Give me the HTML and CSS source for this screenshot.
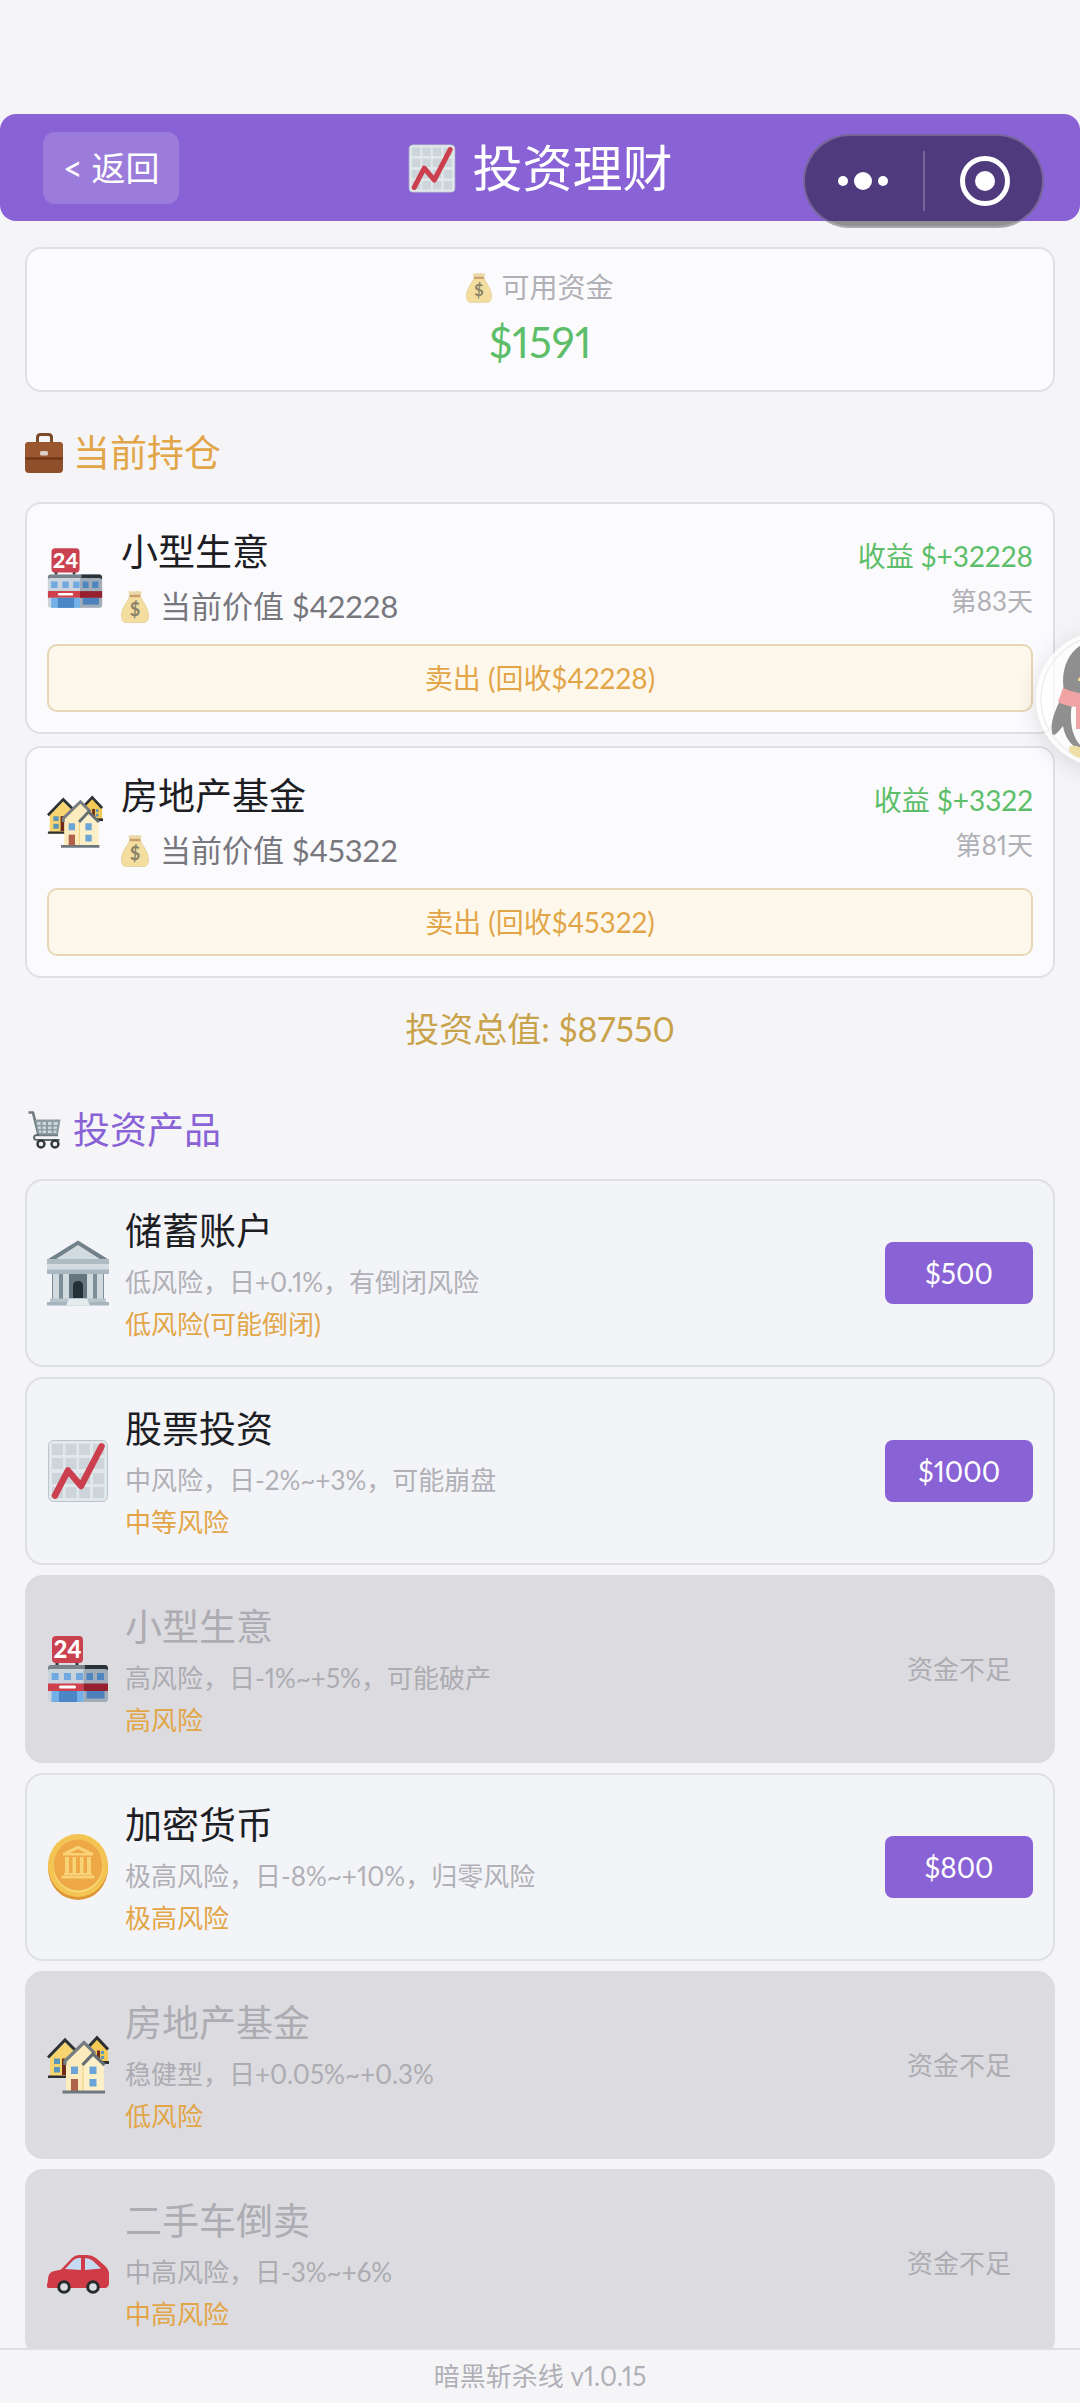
FILE: index.html
```html
<!DOCTYPE html>
<html lang="zh-CN">
<head>
<meta charset="utf-8">
<meta name="viewport" content="width=device-width, initial-scale=1">
<title>投资理财</title>
<link rel="stylesheet" href="styles.css">
</head>
<body>
<svg class="sprite" aria-hidden="true">
  <symbol id="i-chart" viewBox="0 0 62 68">
    <rect x="1.5" y="3.5" width="59" height="61" rx="5" fill="#e1e8ec" stroke="#bcc5ca"/>
    <g fill="#cdd5da">
      <path d="M5 7h11v11H5zM18.500 7h11v11h-11zM32 7h11v11H32zM46 7h11v11H46zM5 21h11v11H5zM18.500 21h11v11h-11zM32 21h11v11H32zM46 21h11v11H46zM5 36h11v11H5zM18.500 36h11v11h-11zM32 36h11v11H32zM46 36h11v11H46zM5 50h11v11H5zM18.500 50h11v11h-11zM32 50h11v11H32zM46 50h11v11H46z"/>
    </g>
    <path d="M8 58.500 21 33.500 34 49 54.500 9.500" fill="none" stroke="#cb3f4e" stroke-width="6.500" stroke-linecap="round" stroke-linejoin="round"/>
  </symbol>
  <symbol id="i-bag" viewBox="0 0 28 33">
    <path d="M7.500.8 10 1.800 12 .7 14 1.800 16 .7 18.500 1.800 20.500.8 20 5H8z" fill="#ead9a6"/>
    <path d="M8.500 6.500h11C21 11 27.500 18 27.500 25c0 5-1.500 7.500-5 7.500h-17C2 32.500.5 30 .5 25 .5 18 7 11 8.500 6.500z" fill="#f3dea0" stroke="#e3cd96" stroke-width=".8"/>
    <path d="M8.500 4.800h11v2.400h-11z" fill="#c9a06c"/>
    <text x="14" y="25.500" text-anchor="middle" font-size="18" font-weight="700" fill="#8a8268">$</text>
  </symbol>
  <symbol id="i-case" viewBox="0 0 38 40">
    <path d="M12.500 10V4.500q0-3 3-3h8q3 0 3 3V10" fill="none" stroke="#7b4a2b" stroke-width="3"/>
    <rect y="9" width="38" height="31" rx="4" fill="#8f4f2a"/>
    <path d="M0 25V12.500Q0 9 4 9h30q4 0 4 3.500V25z" fill="#9a562f"/>
    <path d="M0 24.500h38v2H0z" fill="#6b3117"/>
    <rect x="15" y="18" width="8" height="4.500" rx="1.500" fill="#ddd0c8"/>
  </symbol>
  <symbol id="i-cart" viewBox="0 0 38 40">
    <path d="M3.500 2.500H8L13.500 25H33" fill="none" stroke="#6e7b80" stroke-width="2.600" stroke-linejoin="round"/>
    <path d="M10 9.500h25.500L33 24.500H13z" fill="#8f9da3"/>
    <path d="M12 12h3.500v3H12.700zM17.500 12H21v3h-3.500zM23 12h3.500v3H23zM28.500 12H33l-.5 3h-4zM12.800 16.500h3v2.500h-2.500zM17.500 16.500H21V19h-3.500zM23 16.500h3.500V19H23zM28.500 16.500h3.700l-.5 2.500h-3.200zM13.800 20.500h2.200V23h-1.600zM17.500 20.500H21V23h-3.500zM23 20.500h3.500V23H23zM28.500 20.500h3l-.4 2.500h-2.600z" fill="#cbd9df"/>
    <path d="M14 25q-5-.5-5 2.500 0 2.500 4 2.500h21.500" fill="none" stroke="#59666b" stroke-width="2"/>
    <circle cx="16" cy="34" r="3.500" fill="#eef1f3" stroke="#30383c" stroke-width="2.400"/>
    <circle cx="30" cy="34" r="3.500" fill="#eef1f3" stroke="#30383c" stroke-width="2.400"/>
  </symbol>
  <symbol id="i-store" viewBox="0 0 62 68">
    <path d="M8.500 26h3v6h-3zM28.500 26h3v6h-3z" fill="#333a40"/>
    <rect x="5" y="1" width="31" height="27" rx="4" fill="#ca4150"/>
    <text x="20.500" y="23" text-anchor="middle" font-size="24" font-weight="900" fill="#fff">24</text>
    <rect x="1" y="30" width="60" height="37" rx="3" fill="#c9d4dc"/>
    <path d="M36.500 30H58q3 0 3 3v31q0 3-3 3H36.500z" fill="#a0adb9"/>
    <path d="M1 35v-2q0-3 3-3h34v4H3z" fill="#78838b"/>
    <path d="M38 30h20q3 0 3 4v1l-3-1H38z" fill="#2c3338"/>
    <path d="M4.600 38h7v7h-7zM17 38h7v7h-7zM29 38h7v7h-7z" fill="#6fa9df"/>
    <path d="M39.500 38h6.500v7h-6.500zM50 38h7v7h-7z" fill="#4f86bf"/>
    <path d="M1 48.500h35.500V56H1z" fill="#cf3f4c"/>
    <path d="M36.500 48.500H61V56H36.500z" fill="#97202f"/>
    <rect x="12" y="50.500" width="17" height="3" rx="1.500" fill="#fff"/>
    <path d="M4.600 56h32v11h-32z" fill="#74b0e8"/>
    <path d="M12 56h18v11H12z" fill="#4b86c6"/>
    <path d="M39.500 56h18v7.500h-18z" fill="#4c81bc"/>
  </symbol>
  <symbol id="i-houses" viewBox="0 0 62 68">
    <path d="M3 26 18 11l14 14v22H3z" fill="#f7d470"/>
    <path d="M38 20 50 8l11 12v13H38z" fill="#f5c956"/>
    <path d="M1 47h22v-2.500H1z" fill="#2d2f33"/>
    <path d="M54 30h8v3h-8z" fill="#2d2f33"/>
    <path d="M1 26.500 18 9l15 15M38 19.500 50 6.800 61 18.500" fill="none" stroke="#2e3134" stroke-width="3"/>
    <path d="M7 27.500h6V33H7zM7 36h6v5.500H7zM54 20h3v3h-3zM54 25h3v3h-3z" fill="#5b97b8"/>
    <path d="M15 27.500h6V44h-6z" fill="#6e2b1a"/>
    <path d="M50 19.500h3V28h-3z" fill="#6e2b1a"/>
    <path d="M19 30 37 12l20 20v29H19z" fill="#fcebbd"/>
    <path d="M36 32 46 22l11 10v29H36z" fill="#fdf0c9"/>
    <path d="M36 30v31" stroke="#edcf80"/>
    <path d="M18 34V30L37 11.500l11 11" fill="none" stroke="#757d83" stroke-width="3.200"/>
    <path d="M35.500 34 46 22.800 57.500 34" fill="none" stroke="#666e75" stroke-width="3.200"/>
    <path d="M24 35.500h7V43h-7zM42.500 35.500h7V43h-7zM42.500 48h7v7.500h-7z" fill="#6ba5d8"/>
    <path d="M24 48h7v12h-7z" fill="#b0614a"/>
    <path d="M15.500 59.500H58v3H15.500z" fill="#6f777f"/>
  </symbol>
  <symbol id="i-bank" viewBox="0 0 62 68">
    <path d="M31 1.500 60 19.500v3H2v-3z" fill="#73818b"/>
    <path d="M31 6 56 22H6z" fill="#d2dbe0"/>
    <path d="M0 20h62v6H0z" fill="#aebbc3"/>
    <path d="M0 25h62v6H0z" fill="#d3dce1"/>
    <path d="M0 30.500h62V35H0z" fill="#a9b7c0"/>
    <path d="M5 35h52v26H5z" fill="#7e8e98"/>
    <path d="M6 35h6v26H6zM16 35h6v26h-6zM40 35h6v26h-6zM50 35h6v26h-6z" fill="#d0d9de"/>
    <path d="M22 35h18v26H22z" fill="#657680"/>
    <path d="M26 59V47q0-5 5-5t5 5v12z" fill="#263137"/>
    <path d="M3 59.500h56V63H3z" fill="#b9c5cc"/>
    <path d="M0 63h62v3.500H0z" fill="#a7b4bc"/>
    <path d="M22 59.500h18l3 7H19z" fill="#e4ebee"/>
  </symbol>
  <symbol id="i-coin" viewBox="0 0 62 68">
    <ellipse cx="31" cy="35" rx="30" ry="32" fill="#dd9636"/>
    <ellipse cx="31" cy="32.500" rx="30" ry="31.500" fill="#f4c453"/>
    <ellipse cx="31" cy="33" rx="25" ry="26.500" fill="#f8d977"/>
    <ellipse cx="31" cy="32" rx="24.500" ry="25.500" fill="#eea846"/>
    <path d="M31 12.500 46 20v2.500H16V20zM18 24h4v16h-4zM25.500 24h3.500v16h-3.500zM33 24h3.500v16H33zM40 24h4v16h-4zM17 40h28v2H17zM14.500 42.500h33v3h-33z" fill="#f8d277"/>
    <path d="M31 16 39 20H23z" fill="#eea846"/>
  </symbol>
  <symbol id="i-car" viewBox="0 0 62 68">
    <path d="M1 59q-2-1-.5-5l.8-6q.6-4 4.200-5.500L14 40.500 25 29q3-3 7-3h8q5 0 9 3l8 7q5 4 5 9v9q0 4-3.500 5z" fill="#d03b48"/>
    <path d="M18 40 26 31.500q2.500-2.500 5.500-2.500H34v12zM38 29q4 0 7.500 2.500L54 39.500 38 41z" fill="#c4dbf2"/>
    <circle cx="17" cy="58" r="5.300" fill="#d8dee3" stroke="#282b2e" stroke-width="3"/>
    <circle cx="46" cy="58" r="5.300" fill="#d8dee3" stroke="#282b2e" stroke-width="3"/>
  </symbol>
</svg>

<header class="topbar">
  <button class="back" type="button">&lt; 返回</button>
  <h1 class="title"><svg class="title-icon"><use href="#i-chart"/></svg>投资理财</h1>
</header>

<div class="capsule">
  <button type="button" class="capsule-btn" aria-label="更多">
    <svg width="50" height="20" viewBox="0 0 50 20" fill="#fff"><circle cx="5" cy="10" r="5"/><circle cx="25" cy="10" r="9"/><circle cx="45" cy="10" r="5"/></svg>
  </button>
  <span class="capsule-line"></span>
  <button type="button" class="capsule-btn" aria-label="关闭">
    <svg width="50" height="50" viewBox="0 0 50 50"><circle cx="25" cy="25" r="22.500" fill="none" stroke="#fff" stroke-width="5"/><circle cx="25" cy="25" r="10" fill="#fff"/></svg>
  </button>
</div>

<main class="content">
  <section class="fund">
    <p class="fund-label"><svg class="bag-sm"><use href="#i-bag"/></svg>可用资金</p>
    <p class="fund-value">$1591</p>
  </section>

  <h2 class="heading heading-hold"><svg class="heading-icon"><use href="#i-case"/></svg>当前持仓</h2>
  <div class="holdings">
    <article class="holding">
      <div class="holding-row">
        <svg class="holding-icon"><use href="#i-store"/></svg>
        <div class="grow">
          <h3 class="holding-name">小型生意</h3>
          <p class="holding-worth"><svg class="bag"><use href="#i-bag"/></svg>当前价值 $42228</p>
        </div>
        <div class="holding-side">
          <p class="profit">收益 $+32228</p>
          <p class="days">第83天</p>
        </div>
      </div>
      <button class="sell" type="button">卖出 (回收$42228)</button>
    </article>
    <article class="holding">
      <div class="holding-row">
        <svg class="holding-icon"><use href="#i-houses"/></svg>
        <div class="grow">
          <h3 class="holding-name">房地产基金</h3>
          <p class="holding-worth"><svg class="bag"><use href="#i-bag"/></svg>当前价值 $45322</p>
        </div>
        <div class="holding-side">
          <p class="profit">收益 $+3322</p>
          <p class="days">第81天</p>
        </div>
      </div>
      <button class="sell" type="button">卖出 (回收$45322)</button>
    </article>
  </div>
  <p class="total">投资总值: $87550</p>

  <h2 class="heading heading-shop"><svg class="heading-icon"><use href="#i-cart"/></svg>投资产品</h2>
  <div class="products">
    <article class="product">
      <svg class="product-icon"><use href="#i-bank"/></svg>
      <div class="grow">
        <h3 class="product-name">储蓄账户</h3>
        <p class="product-desc">低风险，日+0.1%，有倒闭风险</p>
        <p class="product-risk">低风险(可能倒闭)</p>
      </div>
      <button class="buy" type="button">$500</button>
    </article>
    <article class="product">
      <svg class="product-icon"><use href="#i-chart"/></svg>
      <div class="grow">
        <h3 class="product-name">股票投资</h3>
        <p class="product-desc">中风险，日-2%~+3%，可能崩盘</p>
        <p class="product-risk">中等风险</p>
      </div>
      <button class="buy" type="button">$1000</button>
    </article>
    <article class="product locked">
      <svg class="product-icon"><use href="#i-store"/></svg>
      <div class="grow">
        <h3 class="product-name">小型生意</h3>
        <p class="product-desc">高风险，日-1%~+5%，可能破产</p>
        <p class="product-risk">高风险</p>
      </div>
      <span class="short">资金不足</span>
    </article>
    <article class="product">
      <svg class="product-icon"><use href="#i-coin"/></svg>
      <div class="grow">
        <h3 class="product-name">加密货币</h3>
        <p class="product-desc">极高风险，日-8%~+10%，归零风险</p>
        <p class="product-risk">极高风险</p>
      </div>
      <button class="buy" type="button">$800</button>
    </article>
    <article class="product locked">
      <svg class="product-icon"><use href="#i-houses"/></svg>
      <div class="grow">
        <h3 class="product-name">房地产基金</h3>
        <p class="product-desc">稳健型，日+0.05%~+0.3%</p>
        <p class="product-risk">低风险</p>
      </div>
      <span class="short">资金不足</span>
    </article>
    <article class="product locked">
      <svg class="product-icon"><use href="#i-car"/></svg>
      <div class="grow">
        <h3 class="product-name">二手车倒卖</h3>
        <p class="product-desc">中高风险，日-3%~+6%</p>
        <p class="product-risk">中高风险</p>
      </div>
      <span class="short">资金不足</span>
    </article>
  </div>
</main>

<footer class="footer">暗黑斩杀线 v1.0.15</footer>

<div class="dock">
  <button class="floater" type="button" aria-label="企鹅">
    <svg width="136" height="136" viewBox="0 0 136 136">
      <circle cx="68" cy="68" r="63" fill="none" stroke="#eeeeef" stroke-width="1.500"/>
      <path d="M68 8c-26 0-41 18-41 42l1 16h80V50C108 26 94 8 68 8z" fill="#8f8f90"/>
      <path d="M26 66C18 80 13 96 17 104c3 0 7-5 10-9 2 12 8 20 20 26h42c12-6 20-14 20-26L104 66z" fill="#8f8f90"/>
      <path d="M36 72c-3 20 0 36 12 46h40c12-10 15-26 12-46z" fill="#fbfbfb"/>
      <path d="M33 116q8-4 20 6l14 4q-26 6-34-6z" fill="#efdfa8"/>
      <path d="M27 57q30 14 82 0l4 14q-40 16-66 8v19H40V76q-11-1-18-5z" fill="#efa3a3"/>
      <path d="M42 48q6-8 20-6v8H42z" fill="#f3d89a"/>
    </svg>
  </button>
</div>
</body>
</html>
```
FILE: styles.css
```css
* { box-sizing: border-box; }

body {
  margin: 0;
  height: 100vh;
  padding-top: 114px;
  display: flex;
  flex-direction: column;
  position: relative;
  overflow: hidden;
  background: #f5f5f8;
  color: #1d1e24;
  font-family: Lato, "Noto Sans CJK SC", sans-serif;
  font-variant-numeric: proportional-nums;
}

h1, h2, h3, p { margin: 0; font-weight: 400; }
button { font: inherit; border: 0; padding: 0; }
svg { display: block; flex: none; }
.sprite { display: none; }
.grow { flex: 1; min-width: 0; }

.topbar {
  flex: none;
  display: grid;
  grid-template-columns: 1fr auto 1fr;
  align-items: center;
  padding: 18px 43px 17px;
  border-radius: 16px;
  background: #8963d6;
  color: #fff;
}
.back {
  justify-self: start;
  padding: 12px 20px;
  border-radius: 12px;
  background: #9c7cdb;
  color: #fff;
  font-size: 34px;
  line-height: 48px;
}
.title {
  display: flex;
  align-items: center;
  gap: 17px;
  font-size: 50px;
  line-height: 60px;
}
.title-icon { width: 48px; height: 53px; }

.capsule {
  position: absolute;
  top: 134px;
  right: 36px;
  width: 241px;
  height: 94px;
  display: flex;
  justify-content: center;
  align-items: center;
  gap: 35px;
  border: 2px solid rgba(255, 255, 255, .22);
  border-radius: 47px;
  background: rgba(0, 0, 0, .41);
}
.capsule-btn { background: none; }
.capsule-line { width: 2px; height: 60px; background: rgba(255, 255, 255, .22); }

.content {
  flex: 1;
  min-height: 0;
  overflow-y: auto;
  scrollbar-width: none;
  padding: 26px 25px;
}

.fund {
  padding: 20px;
  border: 2px solid #dfe0e4;
  border-radius: 16px;
  background: #fbfbfd;
  text-align: center;
}
.fund-label {
  display: flex;
  justify-content: center;
  align-items: center;
  gap: 9px;
  margin-bottom: 8px;
  color: #b0b0b6;
  font-size: 28px;
  line-height: 37px;
}
.bag-sm { width: 26px; height: 31px; }
.fund-value { color: #5dbe69; font-size: 42px; line-height: 56px; }

.heading {
  display: flex;
  align-items: center;
  gap: 10px;
  padding: 36px 0 24px;
  font-size: 37px;
  line-height: 50px;
}
.heading-icon { width: 38px; height: 40px; }
.heading-hold { color: #e2a648; }
.heading-shop { color: #8963d6; }

.holdings { display: grid; gap: 12px; }
.holding {
  padding: 20px;
  border: 2px solid #dfe0e4;
  border-radius: 16px;
  background: #fbfbfd;
}
.holding-row { display: flex; align-items: center; gap: 18px; margin-bottom: 12px; }
.holding-icon { width: 56px; height: 62px; }
.holding-name { font-size: 37px; line-height: 56px; }
.holding-worth {
  display: flex;
  align-items: center;
  gap: 11px;
  color: #77777d;
  font-size: 31px;
  line-height: 52px;
}
.bag { width: 28px; height: 33px; }
.holding-side { text-align: right; }
.profit { color: #5dbe69; font-size: 28px; line-height: 46px; }
.days { color: #b0b0b6; font-size: 26px; line-height: 44px; }
.sell {
  display: block;
  width: 100%;
  padding: 12px;
  border: 2px solid #e8d6b4;
  border-radius: 10px;
  background: #fef8ec;
  color: #e2a648;
  font-size: 28px;
  line-height: 40px;
}

.total {
  margin: 26px 0 15px;
  color: #c9a24c;
  font-size: 34px;
  line-height: 50px;
  text-align: center;
}

.products { display: grid; gap: 10px; }
.product {
  display: flex;
  align-items: center;
  gap: 16px;
  padding: 20px;
  border: 2px solid #dfe0e5;
  border-radius: 18px;
  background: #f3f4f8;
}
.product-icon { width: 62px; height: 68px; }
.product-name { font-size: 37px; line-height: 60px; }
.product-desc { color: #b0b0b6; font-size: 26px; line-height: 42px; }
.product-risk { color: #e2a648; font-size: 26px; line-height: 42px; }
.buy {
  width: 148px;
  border-radius: 8px;
  background: #8963d6;
  color: #fff;
  font-size: 28px;
  line-height: 62px;
}
.short {
  width: 148px;
  color: #acacb2;
  font-size: 26px;
  line-height: 62px;
  text-align: center;
}
.locked { border-color: #dcdbe0; background: #dcdbe0; }
.locked .product-name, .locked .product-desc { color: #acacb2; }

.footer {
  flex: none;
  border-top: 2px solid #dfdfe5;
  background: #f5f5f8;
  color: #b0b0b6;
  font-size: 26px;
  line-height: 53px;
  text-align: center;
}

.dock {
  position: absolute;
  top: 599px;
  right: 0;
  width: 76px;
  padding: 32px 0 32px 32px;
  overflow: hidden;
  pointer-events: none;
}
.floater {
  display: block;
  width: 136px;
  height: 136px;
  border-radius: 50%;
  background: rgba(255, 255, 255, .7);
  box-shadow: 0 4px 24px rgba(0, 0, 0, .12);
  pointer-events: auto;
}
```
